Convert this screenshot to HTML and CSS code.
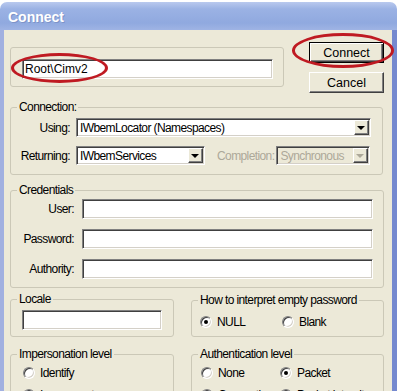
FILE: index.html
```html
<!DOCTYPE html>
<html lang="en">
<head>
    <meta charset="UTF-8">
    <title>Connect</title>
    <link rel="stylesheet" href="styles.css">
</head>
<body>

<div class="window">
    <div class="titlebar">Connect</div>
    <div class="client">

        <div class="top-row">
            <div class="ns-group">
                <input type="text" class="field ns-field" value="Root\Cimv2">
            </div>
            <div class="buttons">
                <button class="btn default">Connect</button>
                <button class="btn">Cancel</button>
            </div>
        </div>

        <fieldset class="group connection">
            <legend>Connection:</legend>
            <div class="row">
                <label class="lbl">Using:</label>
                <div class="combo using"><span class="combo-text">IWbemLocator (Namespaces)</span><i class="drop"></i></div>
            </div>
            <div class="row">
                <label class="lbl">Returning:</label>
                <div class="combo returning"><span class="combo-text">IWbemServices</span><i class="drop"></i></div>
                <label class="lbl-disabled">Completion:</label>
                <div class="combo completion disabled"><span class="combo-text">Synchronous</span><i class="drop"></i></div>
            </div>
        </fieldset>

        <fieldset class="group credentials">
            <legend>Credentials</legend>
            <div class="row">
                <label class="lbl cred-lbl" for="userInput">User:</label>
                <input type="text" id="userInput" class="field cred-field">
            </div>
            <div class="row">
                <label class="lbl cred-lbl" for="passInput">Password:</label>
                <input type="text" id="passInput" class="field cred-field">
            </div>
            <div class="row">
                <label class="lbl cred-lbl" for="authInput">Authority:</label>
                <input type="text" id="authInput" class="field cred-field">
            </div>
        </fieldset>

        <div class="pair">
            <fieldset class="group left-group locale">
                <legend>Locale</legend>
                <input type="text" class="field locale-field">
            </fieldset>
            <fieldset class="group right-group password">
                <legend>How to interpret empty password</legend>
                <div class="options password-options">
                    <div class="radio-row">
                        <span class="radio"><i class="dot checked"></i>NULL</span>
                        <span class="radio"><i class="dot"></i>Blank</span>
                    </div>
                </div>
            </fieldset>
        </div>

        <div class="pair last">
            <fieldset class="group left-group impersonation">
                <legend>Impersonation level</legend>
                <div class="options impersonation-options">
                    <div class="radio-row">
                        <span class="radio"><i class="dot"></i>Identify</span>
                    </div>
                    <div class="radio-row">
                        <span class="radio"><i class="dot checked"></i>Impersonate</span>
                    </div>
                </div>
            </fieldset>
            <fieldset class="group right-group authentication">
                <legend>Authentication level</legend>
                <div class="options authentication-options">
                    <div class="radio-row">
                        <span class="radio"><i class="dot"></i>None</span>
                        <span class="radio"><i class="dot checked"></i>Packet</span>
                    </div>
                    <div class="radio-row">
                        <span class="radio"><i class="dot"></i>Connection</span>
                        <span class="radio"><i class="dot"></i>Packet integrity</span>
                    </div>
                </div>
            </fieldset>
        </div>

    </div>

    <!-- red annotation marks -->
    <div class="mark mark-ns"></div>
    <div class="mark mark-connect"></div>
</div>

</body>
</html>
```

FILE: styles.css
```css
html, body {
    margin: 0;
    padding: 0;
    background-color: #fff;
    height: 391px;
    overflow: hidden;
}
body {
    font-family: "Liberation Sans", Arial, sans-serif;
    font-size: 12px;
    letter-spacing: -0.6px;
    color: #000;
}
.window {
    position: relative;
    width: 397px;
    margin-top: 2px;
}
.titlebar {
    height: 28px;
    padding-left: 8px;
    border-radius: 7px 7px 0 0;
    background: linear-gradient(#b9c9ee, #9bb2e4 25%, #90a9df 75%, #9fb4e4);
    color: #fff;
    font: bold 14px "Liberation Sans", sans-serif;
    line-height: 31px;
    letter-spacing: 0;
    text-shadow: 1px 1px 0 #7d93c8;
}
.client {
    background-color: #ece9d8;
    border-left: 4px solid #a1b0e0;
    border-right: 5px solid #7589cf;
    padding: 0 5px 0 6px;
    height: 400px;
}

/* top row */
.top-row {
    display: flex;
    align-items: flex-start;
    padding-top: 12px;
}
.ns-group {
    width: 274px;
    margin-top: 5px;
    padding: 11px 0 7px 11px;
    border: 1px solid #cbc8b7;
    border-radius: 3px;
    box-sizing: border-box;
}
.buttons {
    display: flex;
    flex-direction: column;
    gap: 9px;
    margin-left: 25px;
}
.btn {
    width: 75px;
    height: 21px;
    padding: 0;
    font: inherit;
    font-size: 12.5px;
    color: #000;
    background-color: #ece9d8;
    border: 1px solid;
    border-color: #fff #404040 #404040 #fff;
    box-shadow: inset -1px -1px #808080;
    box-sizing: border-box;
}
.btn.default {
    border-color: #000;
    box-shadow: inset 1px 1px #fff, inset -1px -1px #404040, inset -2px -2px #808080;
}

/* fields */
.field {
    height: 20px;
    margin: 0;
    padding: 0 0 0 1px;
    font: inherit;
    color: #000;
    background-color: #fff;
    border: 1px solid;
    border-color: #808080 #fff #fff #808080;
    box-shadow: inset 1px 1px #404040, inset -1px -1px #d4d0c8;
    box-sizing: border-box;
    outline: none;
}
.ns-field {
    width: 251px;
    padding-left: 2px;
}
.cred-field {
    width: 291px;
}
.locale-field {
    width: 140px;
    margin: 4px 0 0 11px;
}

/* group boxes */
.group {
    margin: 0;
    padding: 0;
    min-width: 0;
    border: 1px solid #cbc8b7;
    border-radius: 3px;
    box-sizing: border-box;
}
.group legend {
    margin-left: 6px;
    padding: 0 2px;
    line-height: 14px;
}
.connection {
    width: 373px;
    margin-top: 7px;
    padding: 4px 0 9px 0;
}
.connection .row + .row {
    margin-top: 9px;
}
.credentials {
    width: 374px;
    margin-top: 8px;
    padding: 2px 0 8px 0;
}
.credentials .row + .row {
    margin-top: 10px;
}
.row {
    display: flex;
    align-items: center;
}
.lbl {
    width: 59px;
    margin-right: 6px;
    text-align: right;
    flex-shrink: 0;
}
.cred-lbl {
    width: 63px;
    margin-right: 8px;
}
.lbl-disabled {
    margin: 0 2px 0 12px;
    color: #aca899;
}

/* combo boxes */
.combo {
    display: flex;
    align-items: center;
    height: 19px;
    padding: 1px;
    background-color: #fff;
    border: 1px solid;
    border-color: #808080 #fff #fff #808080;
    box-shadow: inset 1px 1px #404040, inset -1px -1px #d4d0c8;
    box-sizing: border-box;
}
.combo-text {
    flex: 1;
    padding-left: 2px;
    white-space: nowrap;
    overflow: hidden;
}
.using {
    width: 295px;
}
.returning {
    width: 129px;
}
.completion {
    width: 94px;
}
.drop {
    display: flex;
    align-items: center;
    justify-content: center;
    width: 15px;
    height: 15px;
    background-color: #ece9d8;
    border: 1px solid;
    border-color: #fff #404040 #404040 #fff;
    box-shadow: inset -1px -1px #808080;
    box-sizing: border-box;
}
.drop::after {
    content: "";
    border-left: 4px solid transparent;
    border-right: 4px solid transparent;
    border-top: 4px solid #000;
    margin: 1px 1px 0 0;
}
.combo.disabled {
    background-color: #ece9d8;
    color: #aca899;
}
.combo.disabled .drop::after {
    border-top-color: #aca899;
}

/* bottom pairs */
.pair {
    display: flex;
    align-items: flex-start;
}
.left-group {
    width: 164px;
}
.right-group {
    width: 193px;
    margin-left: 17px;
}
.locale {
    margin-top: 4px;
    padding-bottom: 6px;
}
.password {
    margin-top: 5px;
    padding: 7px 0 6px 0;
}
.password-options {
    padding-left: 8px;
}
.pair.last .group {
    margin-top: 10px;
    padding-top: 4px;
    padding-bottom: 6px;
}
.impersonation-options {
    padding-left: 12px;
}
.authentication-options {
    padding-left: 9px;
}
.authentication-options .radio {
    width: 79px;
}
.radio-row {
    display: flex;
    height: 16px;
    align-items: center;
}
.radio-row + .radio-row {
    margin-top: 6px;
}
.radio {
    display: inline-flex;
    align-items: center;
    width: 82px;
    white-space: nowrap;
}
.dot {
    position: relative;
    width: 12px;
    height: 12px;
    margin-right: 5px;
    border-radius: 50%;
    background-color: #fff;
    border: 1px solid;
    border-color: #808080 #fff #fff #808080;
    box-shadow: inset 1px 1px #404040, inset -1px -1px #d4d0c8;
    box-sizing: border-box;
    flex-shrink: 0;
}
.dot.checked::after {
    content: "";
    position: absolute;
    left: 3px;
    top: 3px;
    width: 4px;
    height: 4px;
    border-radius: 50%;
    background-color: #000;
}

/* annotation ellipses */
.mark {
    position: absolute;
    border: 3px solid #bf1a22;
    border-radius: 50%;
    box-sizing: border-box;
}
.mark-ns {
    left: 11px;
    top: 51px;
    width: 97px;
    height: 30px;
}
.mark-connect {
    left: 292px;
    top: 31px;
    width: 102px;
    height: 35px;
}
```
